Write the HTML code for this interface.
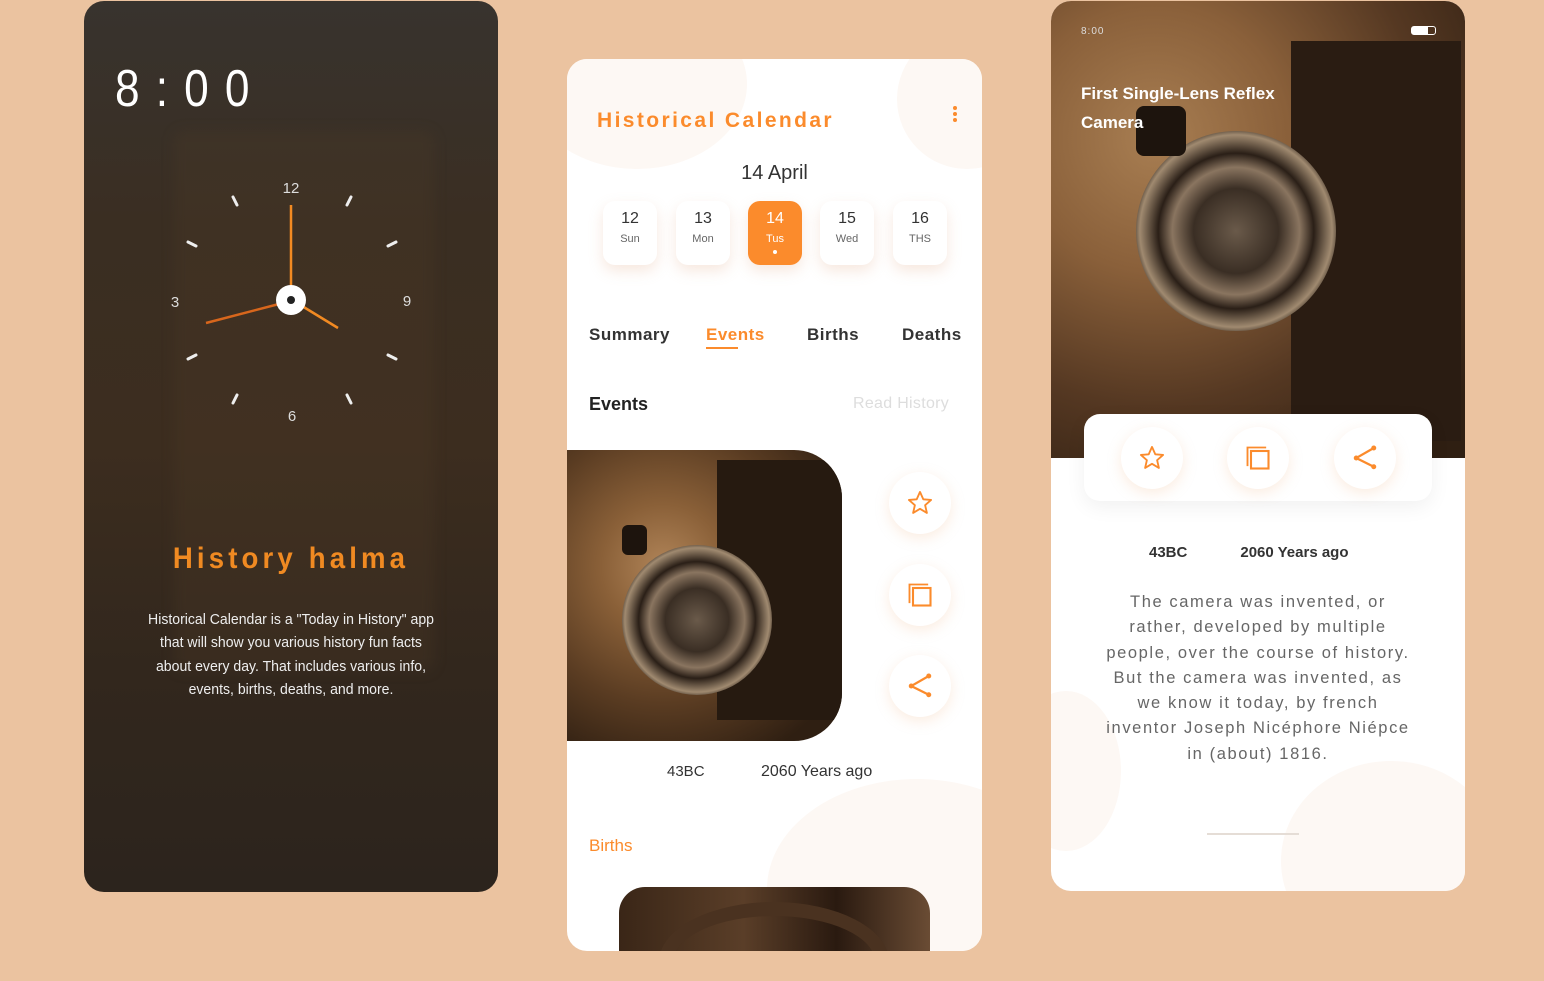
<!DOCTYPE html>
<html><head><meta charset="utf-8"><style>
*{margin:0;padding:0;box-sizing:border-box}
body{width:1544px;height:981px;background:#ebc3a0;position:relative;overflow:hidden;font-family:"Liberation Sans",sans-serif}
.card{position:absolute;border-radius:20px;overflow:hidden}
.abs{position:absolute}
.photo{background:radial-gradient(circle at 35% 40%,#b08458 0,#8a6038 25%,#5a3c22 55%,#2f1f12 85%);}
.lens{position:absolute;border-radius:50%;background:radial-gradient(circle,#6a5a4a 0,#3a2e24 30%,#8a7560 45%,#2a1f17 55%,#a08a70 68%,#2a1f17 75%,transparent 77%)}
.btn{position:absolute;width:62px;height:62px;border-radius:50%;background:#fff;box-shadow:0 4px 14px rgba(240,180,130,.25);display:flex;align-items:center;justify-content:center}
.day{position:absolute;top:201px;width:54px;height:64px;border-radius:12px;background:#fff;box-shadow:0 6px 14px rgba(230,180,150,.3);text-align:center;color:#333}
.day b{display:block;font-weight:normal;font-size:16px;margin-top:9px}
.day i{display:block;font-style:normal;font-size:11px;color:#666;margin-top:5px}
</style></head><body>

<!-- LEFT -->
<div class="card" style="left:84px;top:1px;width:414px;height:891px;background:linear-gradient(180deg,#38332e 0%,#3a2e22 25%,#3c2d1f 50%,#32271d 75%,#2c241d 100%)">
  <div class="abs" style="left:90px;top:130px;width:260px;height:540px;background:rgba(80,60,40,.25);border-radius:10px;filter:blur(6px)"></div>
  <div class="abs" style="left:31px;top:58px;font-size:52px;color:#fff;letter-spacing:19px;transform:scaleX(0.85);transform-origin:left">8:00</div>
  <svg class="abs" style="left:0;top:0" width="414" height="891">
    <g stroke="#eee" stroke-width="3" stroke-linecap="round">
      <line x1="149" y1="196" x2="153" y2="204"/><line x1="267" y1="196" x2="263" y2="204"/>
      <line x1="104" y1="241" x2="112" y2="245"/><line x1="312" y1="241" x2="304" y2="245"/>
      <line x1="104" y1="358" x2="112" y2="354"/><line x1="312" y1="358" x2="304" y2="354"/>
      <line x1="149" y1="402" x2="153" y2="394"/><line x1="267" y1="402" x2="263" y2="394"/>
    </g>
    <line x1="207" y1="204" x2="207" y2="290" stroke="#f28a22" stroke-width="2.5"/>
    <line x1="122" y1="322" x2="195" y2="303" stroke="#d8661c" stroke-width="2.5"/>
    <line x1="218" y1="305" x2="254" y2="327" stroke="#f28a22" stroke-width="2.5"/>
    <circle cx="207" cy="299" r="15" fill="#fff"/><circle cx="207" cy="299" r="4" fill="#222"/>
    <g fill="#ddd" font-family="Liberation Sans" font-size="15" text-anchor="middle">
      <text x="207" y="192">12</text><text x="91" y="306">3</text><text x="323" y="305">9</text><text x="208" y="420">6</text>
    </g>
  </svg>
  <div class="abs" style="left:0;width:414px;top:541px;text-align:center;font-size:30px;font-weight:bold;letter-spacing:4.5px;color:#f08a22;transform:scaleX(0.92)">History halma</div>
  <div class="abs" style="left:0;width:414px;top:608px;text-align:center;font-size:14.5px;line-height:23.3px;color:#eee;white-space:nowrap;transform:scaleX(0.97)">Historical Calendar is a "Today in History" app<br>that will show you various history fun facts<br>about every day. That includes various info,<br>events, births, deaths, and more.</div>
</div>

<!-- MIDDLE -->
<div class="card" style="left:567px;top:59px;width:415px;height:892px;background:#fff">
  <div class="abs" style="left:-40px;top:-60px;width:220px;height:170px;border-radius:50%;background:#fdf8f4"></div>
  <div class="abs" style="left:330px;top:-30px;width:140px;height:140px;border-radius:50%;background:#fdf8f4"></div>
  <div class="abs" style="left:200px;top:720px;width:300px;height:220px;border-radius:50%;background:#fdf8f4"></div>
  <div class="abs" style="left:30px;top:50px;font-size:21px;font-weight:bold;letter-spacing:2.4px;color:#fb8b2c">Historical Calendar</div>
  <div class="abs" style="left:386px;top:47px;width:4px;height:4px;border-radius:2px;background:#fb8b2c;box-shadow:0 6px 0 #fb8b2c,0 12px 0 #fb8b2c"></div>
  <div class="abs" style="left:0;width:415px;top:103px;text-align:center;font-size:20px;color:#333">14 April</div>
</div>
<div class="day" style="left:603px"><b>12</b><i>Sun</i></div>
<div class="day" style="left:676px"><b>13</b><i>Mon</i></div>
<div class="day" style="left:748px;background:#fb8b2c;color:#fff"><b>14</b><i style="color:#fff">Tus</i><div style="width:4px;height:4px;border-radius:2px;background:#fff;margin:5px auto 0"></div></div>
<div class="day" style="left:820px"><b>15</b><i>Wed</i></div>
<div class="day" style="left:893px"><b>16</b><i>THS</i></div>
<div class="abs" style="left:589px;top:325px;font-size:17px;font-weight:bold;color:#333;letter-spacing:.5px">Summary</div>
<div class="abs" style="left:706px;top:325px;font-size:17px;font-weight:bold;color:#fb8b2c;letter-spacing:.5px">Events</div>
<div class="abs" style="left:706px;top:347px;width:32px;height:2px;background:#fb8b2c"></div>
<div class="abs" style="left:807px;top:325px;font-size:17px;font-weight:bold;color:#333;letter-spacing:.5px">Births</div>
<div class="abs" style="left:902px;top:325px;font-size:17px;font-weight:bold;color:#333;letter-spacing:.5px">Deaths</div>
<div class="abs" style="left:589px;top:394px;font-size:18px;font-weight:bold;color:#222">Events</div>
<div class="abs" style="left:853px;top:395px;font-size:16px;color:#ddd;letter-spacing:.3px">Read History</div>
<div class="abs photo" style="left:567px;top:450px;width:275px;height:291px;border-radius:0 48px 48px 0;overflow:hidden">
  <div class="abs" style="left:150px;top:10px;width:125px;height:260px;background:#261a10"></div>
  <div class="lens" style="left:55px;top:95px;width:150px;height:150px"></div>
  <div class="abs" style="left:55px;top:75px;width:25px;height:30px;border-radius:6px;background:#1d140d"></div>
</div>
<div class="btn" style="left:889px;top:472px"><svg width="28" height="28" viewBox="0 0 24 24"><path d="M12 2.5l2.8 6.3 6.7.6-5.1 4.5 1.5 6.6L12 17l-5.9 3.5 1.5-6.6-5.1-4.5 6.7-.6z" fill="none" stroke="#fb8b2c" stroke-width="1.6" stroke-linejoin="round"/></svg></div>
<div class="btn" style="left:889px;top:564px"><svg width="28" height="28" viewBox="0 0 24 24"><path d="M3 19V3h16" fill="none" stroke="#fb8b2c" stroke-width="1.6"/><rect x="6" y="6" width="15" height="15" fill="none" stroke="#fb8b2c" stroke-width="1.8"/></svg></div>
<div class="btn" style="left:889px;top:655px"><svg width="30" height="30" viewBox="0 0 24 24"><path d="M19 4L5 12l14 7" fill="none" stroke="#fb8b2c" stroke-width="1.8"/><circle cx="19" cy="4" r="2" fill="#fb8b2c"/><circle cx="5" cy="12" r="2" fill="#fb8b2c"/><circle cx="19" cy="19" r="2" fill="#fb8b2c"/></svg></div>
<div class="abs" style="left:667px;top:763px;font-size:15px;color:#333">43BC</div>
<div class="abs" style="left:761px;top:763px;font-size:16px;color:#333">2060 Years ago</div>
<div class="abs" style="left:589px;top:836px;font-size:17px;color:#fb8b2c">Births</div>
<div class="abs" style="left:619px;top:887px;width:311px;height:64px;border-radius:26px 26px 0 0;overflow:hidden;background:linear-gradient(90deg,#3a2617,#5a3e28 40%,#2a1a10 70%,#6a4c34)">
  <div class="abs" style="left:40px;top:15px;width:230px;height:120px;border-radius:50%;border:14px solid #4a3220;border-bottom:none"></div>
</div>

<!-- RIGHT -->
<div class="card" style="left:1051px;top:1px;width:414px;height:890px;background:#fff">
  <div class="abs photo" style="left:0;top:0;width:414px;height:457px;background:radial-gradient(circle at 25% 30%,#a87e52 0,#8a603a 30%,#553822 60%,#2f1f12 90%)">
    <div class="abs" style="left:240px;top:40px;width:170px;height:400px;background:#2a1c12"></div>
    <div class="lens" style="left:85px;top:130px;width:200px;height:200px"></div>
    <div class="abs" style="left:85px;top:105px;width:50px;height:50px;border-radius:8px;background:#1d140d"></div>
    <div class="abs" style="left:30px;top:25px;font-size:10px;color:#ddd;letter-spacing:1px">8:00</div>
    <div class="abs" style="left:360px;top:25px;width:25px;height:9px;border:1px solid #fff;border-radius:3px"><div style="width:16px;height:7px;background:#fff"></div></div>
    <div class="abs" style="left:30px;top:78px;font-size:17px;font-weight:bold;color:#fff;line-height:29px">First Single-Lens Reflex<br>Camera</div>
  </div>
  <div class="abs" style="left:-40px;top:690px;width:110px;height:160px;border-radius:50%;background:#fdf8f4"></div>
  <div class="abs" style="left:230px;top:760px;width:220px;height:200px;border-radius:50%;background:#fdf8f4"></div>
  <div class="abs" style="left:33px;top:413px;width:348px;height:87px;border-radius:16px;background:#fff;box-shadow:0 6px 20px rgba(0,0,0,.06)"></div>
  <div class="abs" style="left:0;width:414px;top:543px;font-size:15px;font-weight:bold;color:#333"><span style="margin-left:98px">43BC</span><span style="margin-left:53px">2060 Years ago</span></div>
  <div class="abs" style="left:0;width:414px;top:589px;text-align:center;font-size:16.5px;line-height:25.3px;color:#666;letter-spacing:1.6px;white-space:nowrap">The camera was invented, or<br>rather, developed by multiple<br>people, over the course of history.<br>But the camera was invented, as<br>we know it today, by french<br>inventor Joseph Nicéphore Niépce<br>in (about) 1816.</div>
  <div class="abs" style="left:156px;top:832px;width:92px;height:2px;background:#e5ddd6"></div>
</div>
<div class="btn" style="left:1121px;top:427px"><svg width="28" height="28" viewBox="0 0 24 24"><path d="M12 2.5l2.8 6.3 6.7.6-5.1 4.5 1.5 6.6L12 17l-5.9 3.5 1.5-6.6-5.1-4.5 6.7-.6z" fill="none" stroke="#fb8b2c" stroke-width="1.6" stroke-linejoin="round"/></svg></div>
<div class="btn" style="left:1227px;top:427px"><svg width="28" height="28" viewBox="0 0 24 24"><path d="M3 19V3h16" fill="none" stroke="#fb8b2c" stroke-width="1.6"/><rect x="6" y="6" width="15" height="15" fill="none" stroke="#fb8b2c" stroke-width="1.8"/></svg></div>
<div class="btn" style="left:1334px;top:427px"><svg width="30" height="30" viewBox="0 0 24 24"><path d="M19 4L5 12l14 7" fill="none" stroke="#fb8b2c" stroke-width="1.8"/><circle cx="19" cy="4" r="2" fill="#fb8b2c"/><circle cx="5" cy="12" r="2" fill="#fb8b2c"/><circle cx="19" cy="19" r="2" fill="#fb8b2c"/></svg></div>
</body></html>
